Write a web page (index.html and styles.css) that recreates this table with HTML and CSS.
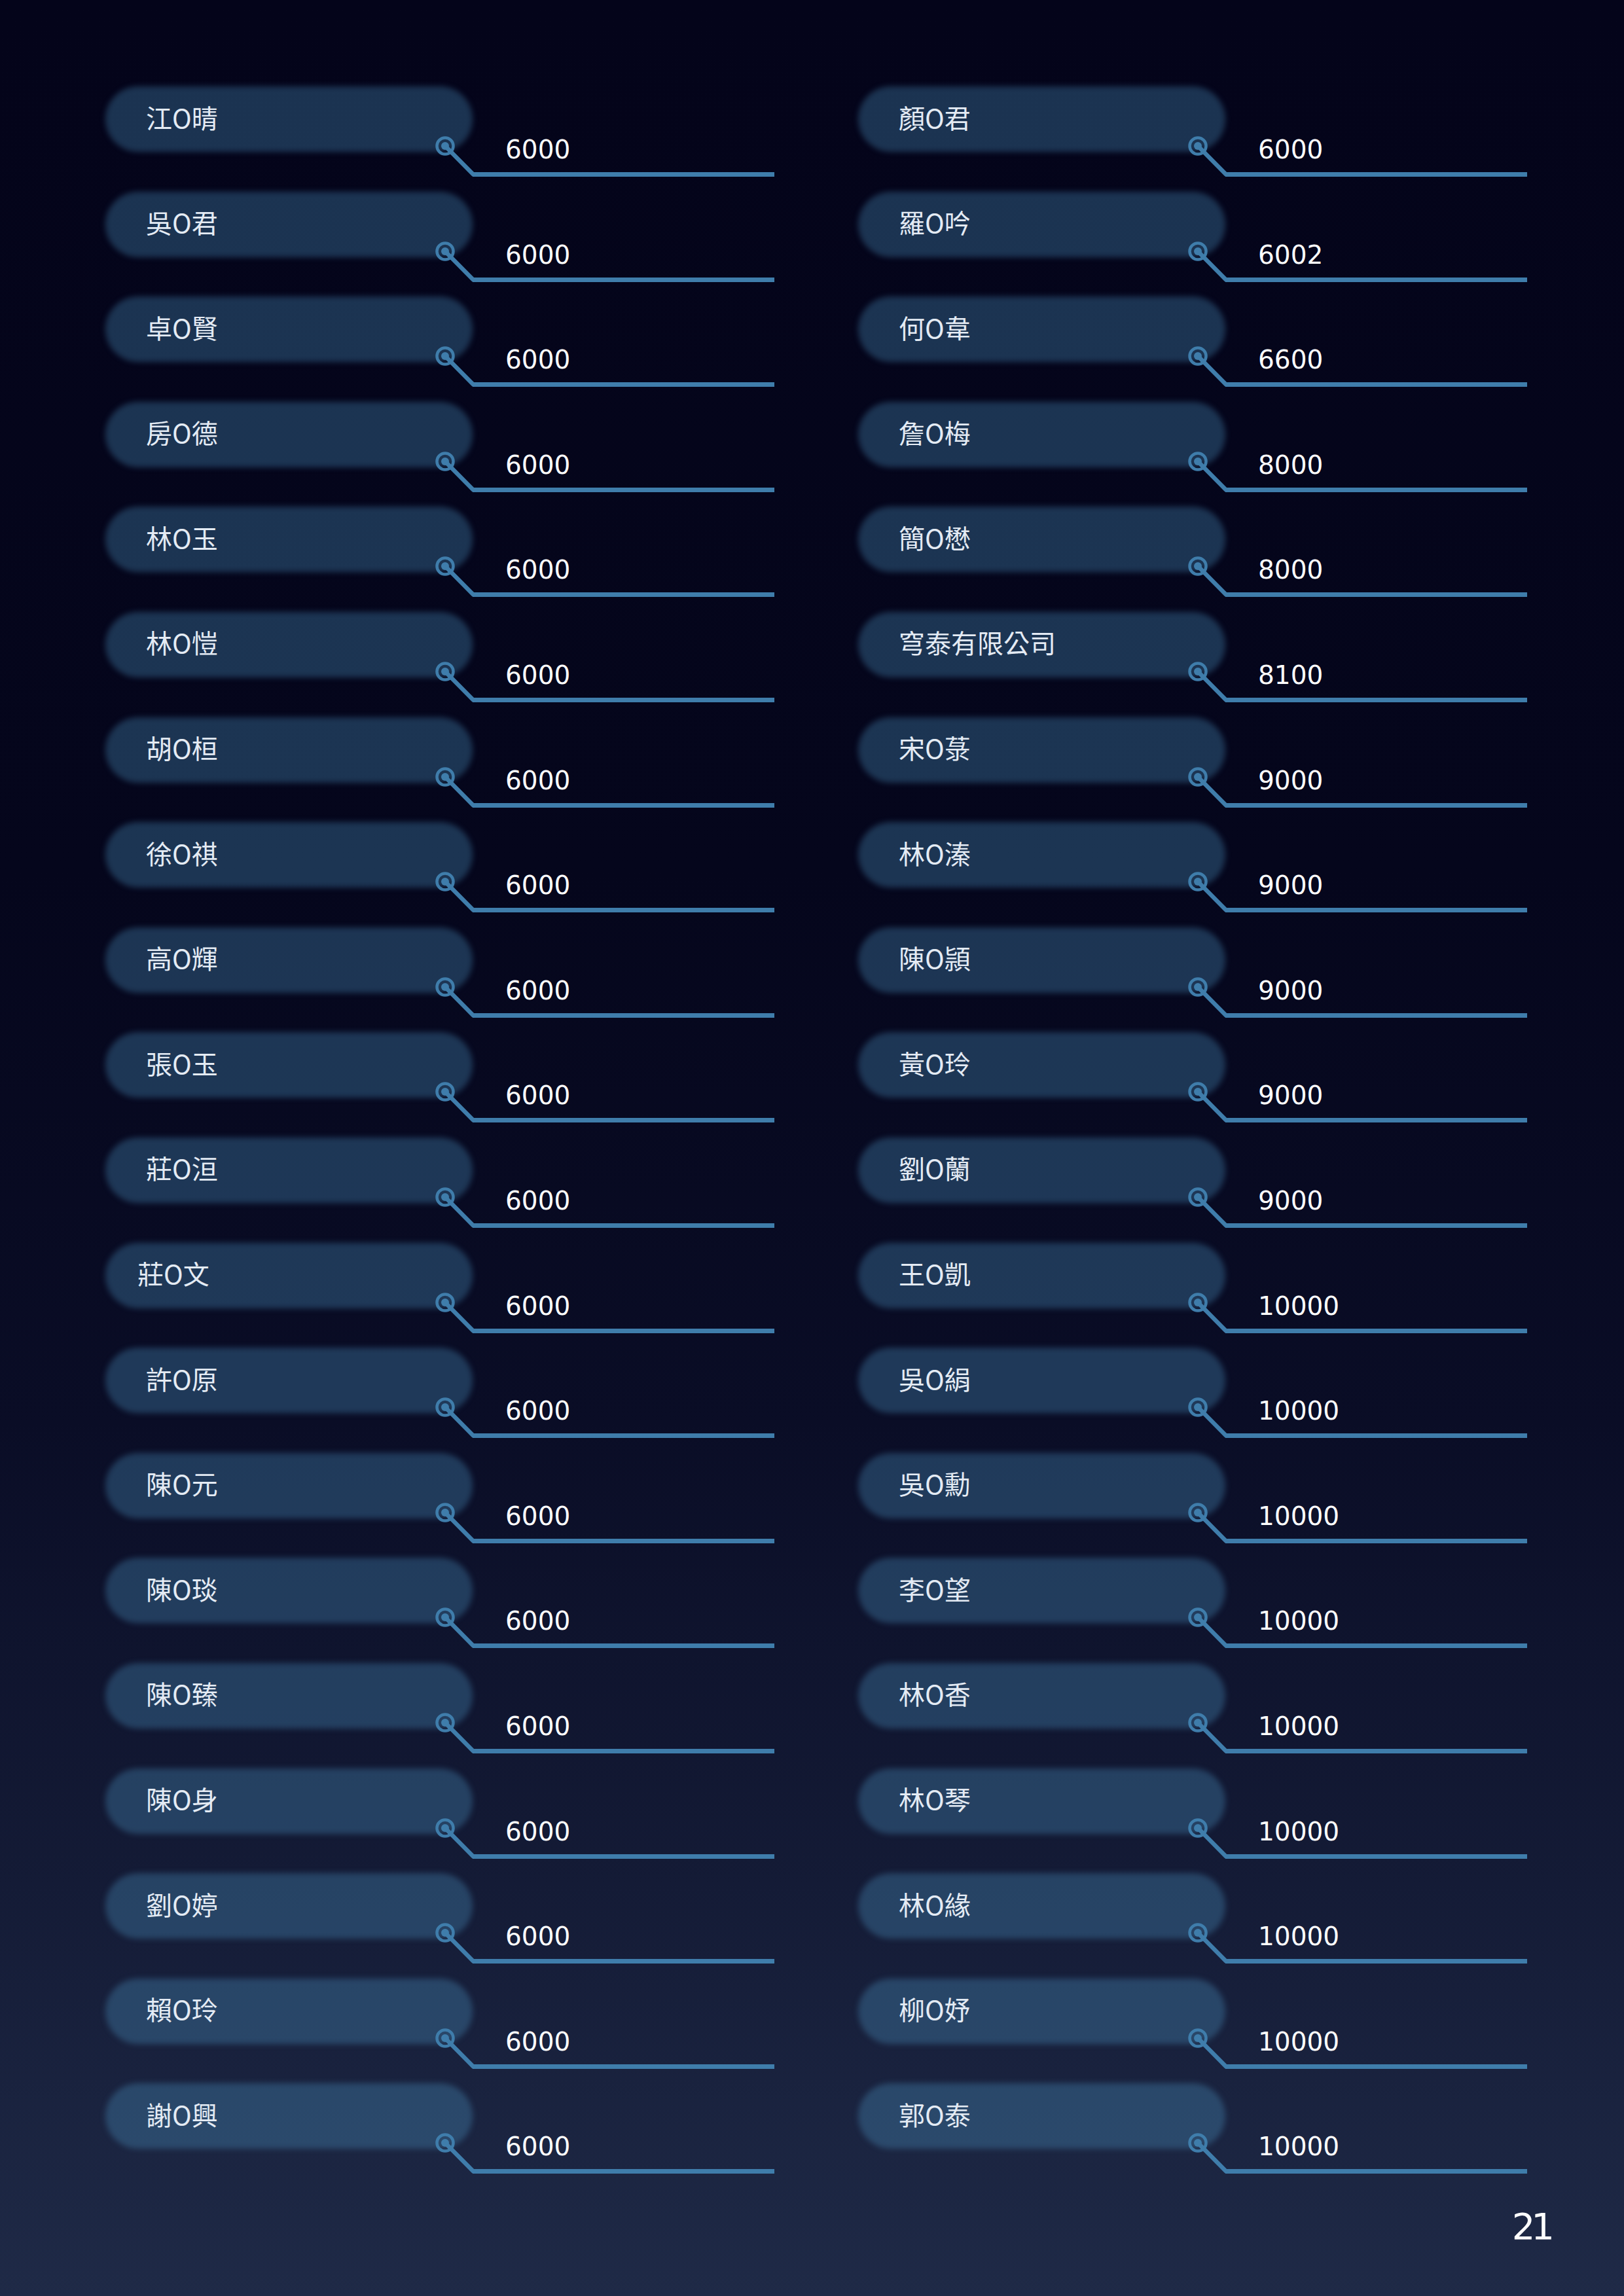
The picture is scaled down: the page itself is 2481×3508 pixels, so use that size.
FILE: index.html
```html
<!DOCTYPE html>
<html lang="zh-Hant">
<head>
<meta charset="utf-8">
<title>21</title>
<link rel="stylesheet" href="styles.css">
</head>
<body>
<main class="page">
  <div class="columns">
    <section class="col">
      <div class="row"><div class="pill"><span>江O晴</span></div><div class="value">6000</div><svg class="node" viewBox="0 0 70 70"><circle class="ring" cx="19" cy="19" r="12.5"/><circle class="dot" cx="19" cy="19" r="6"/><polyline points="19,19 62,62.5 70,62.5"/></svg></div>
      <div class="row"><div class="pill"><span>吳O君</span></div><div class="value">6000</div><svg class="node" viewBox="0 0 70 70"><circle class="ring" cx="19" cy="19" r="12.5"/><circle class="dot" cx="19" cy="19" r="6"/><polyline points="19,19 62,62.5 70,62.5"/></svg></div>
      <div class="row"><div class="pill"><span>卓O賢</span></div><div class="value">6000</div><svg class="node" viewBox="0 0 70 70"><circle class="ring" cx="19" cy="19" r="12.5"/><circle class="dot" cx="19" cy="19" r="6"/><polyline points="19,19 62,62.5 70,62.5"/></svg></div>
      <div class="row"><div class="pill"><span>房O德</span></div><div class="value">6000</div><svg class="node" viewBox="0 0 70 70"><circle class="ring" cx="19" cy="19" r="12.5"/><circle class="dot" cx="19" cy="19" r="6"/><polyline points="19,19 62,62.5 70,62.5"/></svg></div>
      <div class="row"><div class="pill"><span>林O玉</span></div><div class="value">6000</div><svg class="node" viewBox="0 0 70 70"><circle class="ring" cx="19" cy="19" r="12.5"/><circle class="dot" cx="19" cy="19" r="6"/><polyline points="19,19 62,62.5 70,62.5"/></svg></div>
      <div class="row"><div class="pill"><span>林O愷</span></div><div class="value">6000</div><svg class="node" viewBox="0 0 70 70"><circle class="ring" cx="19" cy="19" r="12.5"/><circle class="dot" cx="19" cy="19" r="6"/><polyline points="19,19 62,62.5 70,62.5"/></svg></div>
      <div class="row"><div class="pill"><span>胡O桓</span></div><div class="value">6000</div><svg class="node" viewBox="0 0 70 70"><circle class="ring" cx="19" cy="19" r="12.5"/><circle class="dot" cx="19" cy="19" r="6"/><polyline points="19,19 62,62.5 70,62.5"/></svg></div>
      <div class="row"><div class="pill"><span>徐O祺</span></div><div class="value">6000</div><svg class="node" viewBox="0 0 70 70"><circle class="ring" cx="19" cy="19" r="12.5"/><circle class="dot" cx="19" cy="19" r="6"/><polyline points="19,19 62,62.5 70,62.5"/></svg></div>
      <div class="row"><div class="pill"><span>高O輝</span></div><div class="value">6000</div><svg class="node" viewBox="0 0 70 70"><circle class="ring" cx="19" cy="19" r="12.5"/><circle class="dot" cx="19" cy="19" r="6"/><polyline points="19,19 62,62.5 70,62.5"/></svg></div>
      <div class="row"><div class="pill"><span>張O玉</span></div><div class="value">6000</div><svg class="node" viewBox="0 0 70 70"><circle class="ring" cx="19" cy="19" r="12.5"/><circle class="dot" cx="19" cy="19" r="6"/><polyline points="19,19 62,62.5 70,62.5"/></svg></div>
      <div class="row"><div class="pill"><span>莊O洹</span></div><div class="value">6000</div><svg class="node" viewBox="0 0 70 70"><circle class="ring" cx="19" cy="19" r="12.5"/><circle class="dot" cx="19" cy="19" r="6"/><polyline points="19,19 62,62.5 70,62.5"/></svg></div>
      <div class="row"><div class="pill pill-shift"><span>莊O文</span></div><div class="value">6000</div><svg class="node" viewBox="0 0 70 70"><circle class="ring" cx="19" cy="19" r="12.5"/><circle class="dot" cx="19" cy="19" r="6"/><polyline points="19,19 62,62.5 70,62.5"/></svg></div>
      <div class="row"><div class="pill"><span>許O原</span></div><div class="value">6000</div><svg class="node" viewBox="0 0 70 70"><circle class="ring" cx="19" cy="19" r="12.5"/><circle class="dot" cx="19" cy="19" r="6"/><polyline points="19,19 62,62.5 70,62.5"/></svg></div>
      <div class="row"><div class="pill"><span>陳O元</span></div><div class="value">6000</div><svg class="node" viewBox="0 0 70 70"><circle class="ring" cx="19" cy="19" r="12.5"/><circle class="dot" cx="19" cy="19" r="6"/><polyline points="19,19 62,62.5 70,62.5"/></svg></div>
      <div class="row"><div class="pill"><span>陳O琰</span></div><div class="value">6000</div><svg class="node" viewBox="0 0 70 70"><circle class="ring" cx="19" cy="19" r="12.5"/><circle class="dot" cx="19" cy="19" r="6"/><polyline points="19,19 62,62.5 70,62.5"/></svg></div>
      <div class="row"><div class="pill"><span>陳O臻</span></div><div class="value">6000</div><svg class="node" viewBox="0 0 70 70"><circle class="ring" cx="19" cy="19" r="12.5"/><circle class="dot" cx="19" cy="19" r="6"/><polyline points="19,19 62,62.5 70,62.5"/></svg></div>
      <div class="row"><div class="pill"><span>陳O身</span></div><div class="value">6000</div><svg class="node" viewBox="0 0 70 70"><circle class="ring" cx="19" cy="19" r="12.5"/><circle class="dot" cx="19" cy="19" r="6"/><polyline points="19,19 62,62.5 70,62.5"/></svg></div>
      <div class="row"><div class="pill"><span>劉O婷</span></div><div class="value">6000</div><svg class="node" viewBox="0 0 70 70"><circle class="ring" cx="19" cy="19" r="12.5"/><circle class="dot" cx="19" cy="19" r="6"/><polyline points="19,19 62,62.5 70,62.5"/></svg></div>
      <div class="row"><div class="pill"><span>賴O玲</span></div><div class="value">6000</div><svg class="node" viewBox="0 0 70 70"><circle class="ring" cx="19" cy="19" r="12.5"/><circle class="dot" cx="19" cy="19" r="6"/><polyline points="19,19 62,62.5 70,62.5"/></svg></div>
      <div class="row"><div class="pill"><span>謝O興</span></div><div class="value">6000</div><svg class="node" viewBox="0 0 70 70"><circle class="ring" cx="19" cy="19" r="12.5"/><circle class="dot" cx="19" cy="19" r="6"/><polyline points="19,19 62,62.5 70,62.5"/></svg></div>
    </section>
    <section class="col">
      <div class="row"><div class="pill"><span>顏O君</span></div><div class="value">6000</div><svg class="node" viewBox="0 0 70 70"><circle class="ring" cx="19" cy="19" r="12.5"/><circle class="dot" cx="19" cy="19" r="6"/><polyline points="19,19 62,62.5 70,62.5"/></svg></div>
      <div class="row"><div class="pill"><span>羅O吟</span></div><div class="value">6002</div><svg class="node" viewBox="0 0 70 70"><circle class="ring" cx="19" cy="19" r="12.5"/><circle class="dot" cx="19" cy="19" r="6"/><polyline points="19,19 62,62.5 70,62.5"/></svg></div>
      <div class="row"><div class="pill"><span>何O韋</span></div><div class="value">6600</div><svg class="node" viewBox="0 0 70 70"><circle class="ring" cx="19" cy="19" r="12.5"/><circle class="dot" cx="19" cy="19" r="6"/><polyline points="19,19 62,62.5 70,62.5"/></svg></div>
      <div class="row"><div class="pill"><span>詹O梅</span></div><div class="value">8000</div><svg class="node" viewBox="0 0 70 70"><circle class="ring" cx="19" cy="19" r="12.5"/><circle class="dot" cx="19" cy="19" r="6"/><polyline points="19,19 62,62.5 70,62.5"/></svg></div>
      <div class="row"><div class="pill"><span>簡O懋</span></div><div class="value">8000</div><svg class="node" viewBox="0 0 70 70"><circle class="ring" cx="19" cy="19" r="12.5"/><circle class="dot" cx="19" cy="19" r="6"/><polyline points="19,19 62,62.5 70,62.5"/></svg></div>
      <div class="row"><div class="pill"><span>穹泰有限公司</span></div><div class="value">8100</div><svg class="node" viewBox="0 0 70 70"><circle class="ring" cx="19" cy="19" r="12.5"/><circle class="dot" cx="19" cy="19" r="6"/><polyline points="19,19 62,62.5 70,62.5"/></svg></div>
      <div class="row"><div class="pill"><span>宋O菉</span></div><div class="value">9000</div><svg class="node" viewBox="0 0 70 70"><circle class="ring" cx="19" cy="19" r="12.5"/><circle class="dot" cx="19" cy="19" r="6"/><polyline points="19,19 62,62.5 70,62.5"/></svg></div>
      <div class="row"><div class="pill"><span>林O溱</span></div><div class="value">9000</div><svg class="node" viewBox="0 0 70 70"><circle class="ring" cx="19" cy="19" r="12.5"/><circle class="dot" cx="19" cy="19" r="6"/><polyline points="19,19 62,62.5 70,62.5"/></svg></div>
      <div class="row"><div class="pill"><span>陳O頴</span></div><div class="value">9000</div><svg class="node" viewBox="0 0 70 70"><circle class="ring" cx="19" cy="19" r="12.5"/><circle class="dot" cx="19" cy="19" r="6"/><polyline points="19,19 62,62.5 70,62.5"/></svg></div>
      <div class="row"><div class="pill"><span>黃O玲</span></div><div class="value">9000</div><svg class="node" viewBox="0 0 70 70"><circle class="ring" cx="19" cy="19" r="12.5"/><circle class="dot" cx="19" cy="19" r="6"/><polyline points="19,19 62,62.5 70,62.5"/></svg></div>
      <div class="row"><div class="pill"><span>劉O蘭</span></div><div class="value">9000</div><svg class="node" viewBox="0 0 70 70"><circle class="ring" cx="19" cy="19" r="12.5"/><circle class="dot" cx="19" cy="19" r="6"/><polyline points="19,19 62,62.5 70,62.5"/></svg></div>
      <div class="row"><div class="pill"><span>王O凱</span></div><div class="value">10000</div><svg class="node" viewBox="0 0 70 70"><circle class="ring" cx="19" cy="19" r="12.5"/><circle class="dot" cx="19" cy="19" r="6"/><polyline points="19,19 62,62.5 70,62.5"/></svg></div>
      <div class="row"><div class="pill"><span>吳O絹</span></div><div class="value">10000</div><svg class="node" viewBox="0 0 70 70"><circle class="ring" cx="19" cy="19" r="12.5"/><circle class="dot" cx="19" cy="19" r="6"/><polyline points="19,19 62,62.5 70,62.5"/></svg></div>
      <div class="row"><div class="pill"><span>吳O勳</span></div><div class="value">10000</div><svg class="node" viewBox="0 0 70 70"><circle class="ring" cx="19" cy="19" r="12.5"/><circle class="dot" cx="19" cy="19" r="6"/><polyline points="19,19 62,62.5 70,62.5"/></svg></div>
      <div class="row"><div class="pill"><span>李O望</span></div><div class="value">10000</div><svg class="node" viewBox="0 0 70 70"><circle class="ring" cx="19" cy="19" r="12.5"/><circle class="dot" cx="19" cy="19" r="6"/><polyline points="19,19 62,62.5 70,62.5"/></svg></div>
      <div class="row"><div class="pill"><span>林O香</span></div><div class="value">10000</div><svg class="node" viewBox="0 0 70 70"><circle class="ring" cx="19" cy="19" r="12.5"/><circle class="dot" cx="19" cy="19" r="6"/><polyline points="19,19 62,62.5 70,62.5"/></svg></div>
      <div class="row"><div class="pill"><span>林O琴</span></div><div class="value">10000</div><svg class="node" viewBox="0 0 70 70"><circle class="ring" cx="19" cy="19" r="12.5"/><circle class="dot" cx="19" cy="19" r="6"/><polyline points="19,19 62,62.5 70,62.5"/></svg></div>
      <div class="row"><div class="pill"><span>林O緣</span></div><div class="value">10000</div><svg class="node" viewBox="0 0 70 70"><circle class="ring" cx="19" cy="19" r="12.5"/><circle class="dot" cx="19" cy="19" r="6"/><polyline points="19,19 62,62.5 70,62.5"/></svg></div>
      <div class="row"><div class="pill"><span>柳O妤</span></div><div class="value">10000</div><svg class="node" viewBox="0 0 70 70"><circle class="ring" cx="19" cy="19" r="12.5"/><circle class="dot" cx="19" cy="19" r="6"/><polyline points="19,19 62,62.5 70,62.5"/></svg></div>
      <div class="row"><div class="pill"><span>郭O泰</span></div><div class="value">10000</div><svg class="node" viewBox="0 0 70 70"><circle class="ring" cx="19" cy="19" r="12.5"/><circle class="dot" cx="19" cy="19" r="6"/><polyline points="19,19 62,62.5 70,62.5"/></svg></div>
    </section>
  </div>
  <footer class="page-number">21</footer>
</main>
</body>
</html>
```

FILE: styles.css
```css
html, body {
  margin: 0;
  padding: 0;
}

body {
  width: 2481px;
  min-height: 3508px;
  background: linear-gradient(to bottom, #04041a 0%, #05061c 38%, #0a0d26 62%, #141b36 82%, #1f2a47 100%);
  font-family: "Noto Sans CJK TC", "Noto Sans", sans-serif;
}

.page {
  width: 2481px;
  height: 3508px;
  box-sizing: border-box;
  padding: 132px 0 0 161px;
  display: flex;
  flex-direction: column;
}

.columns {
  display: grid;
  grid-template-columns: 1022px 1022px;
  column-gap: 128px;
}

.col {
  display: flex;
  flex-direction: column;
}

.row {
  position: relative;
  height: 160.6px;
  display: grid;
  grid-template-columns: 561px 461px;
  align-items: start;
}

.pill {
  position: relative;
  isolation: isolate;
  height: 100px;
  box-sizing: border-box;
  padding-left: 62px;
  padding-bottom: 7px;
  display: flex;
  align-items: center;
  color: #e4ebf4;
  font-family: "Noto Sans CJK TC", "Noto Sans", sans-serif;
  font-size: 40px;
  line-height: 1;
}

.pill::before {
  content: "";
  position: absolute;
  inset: 0;
  border-radius: 50px;
  background: rgba(78, 152, 198, 0.32);
  filter: blur(4px);
  z-index: -1;
}

.pill-shift {
  padding-left: 49px;
}

.value {
  padding: 77px 0 15px 50px;
  border-bottom: 7px solid #3f7dab;
  color: #ffffff;
  font-family: "DejaVu Sans", "Liberation Sans", sans-serif;
  font-size: 39px;
  line-height: 39px;
}

.node {
  position: absolute;
  left: 500px;
  top: 72px;
  width: 70px;
  height: 70px;
  overflow: visible;
}

.node .ring {
  fill: none;
  stroke: #3f7dab;
  stroke-width: 4.5;
}

.node .dot {
  fill: #3f7dab;
}

.node polyline {
  fill: none;
  stroke: #3f7dab;
  stroke-width: 6.5;
  stroke-linejoin: round;
}

.page-number {
  margin-top: 29px;
  padding-right: 112px;
  text-align: right;
  color: #ffffff;
  font-family: "DejaVu Sans", "Liberation Sans", sans-serif;
  font-size: 56px;
  line-height: 58px;
  letter-spacing: -6px;
}
```
